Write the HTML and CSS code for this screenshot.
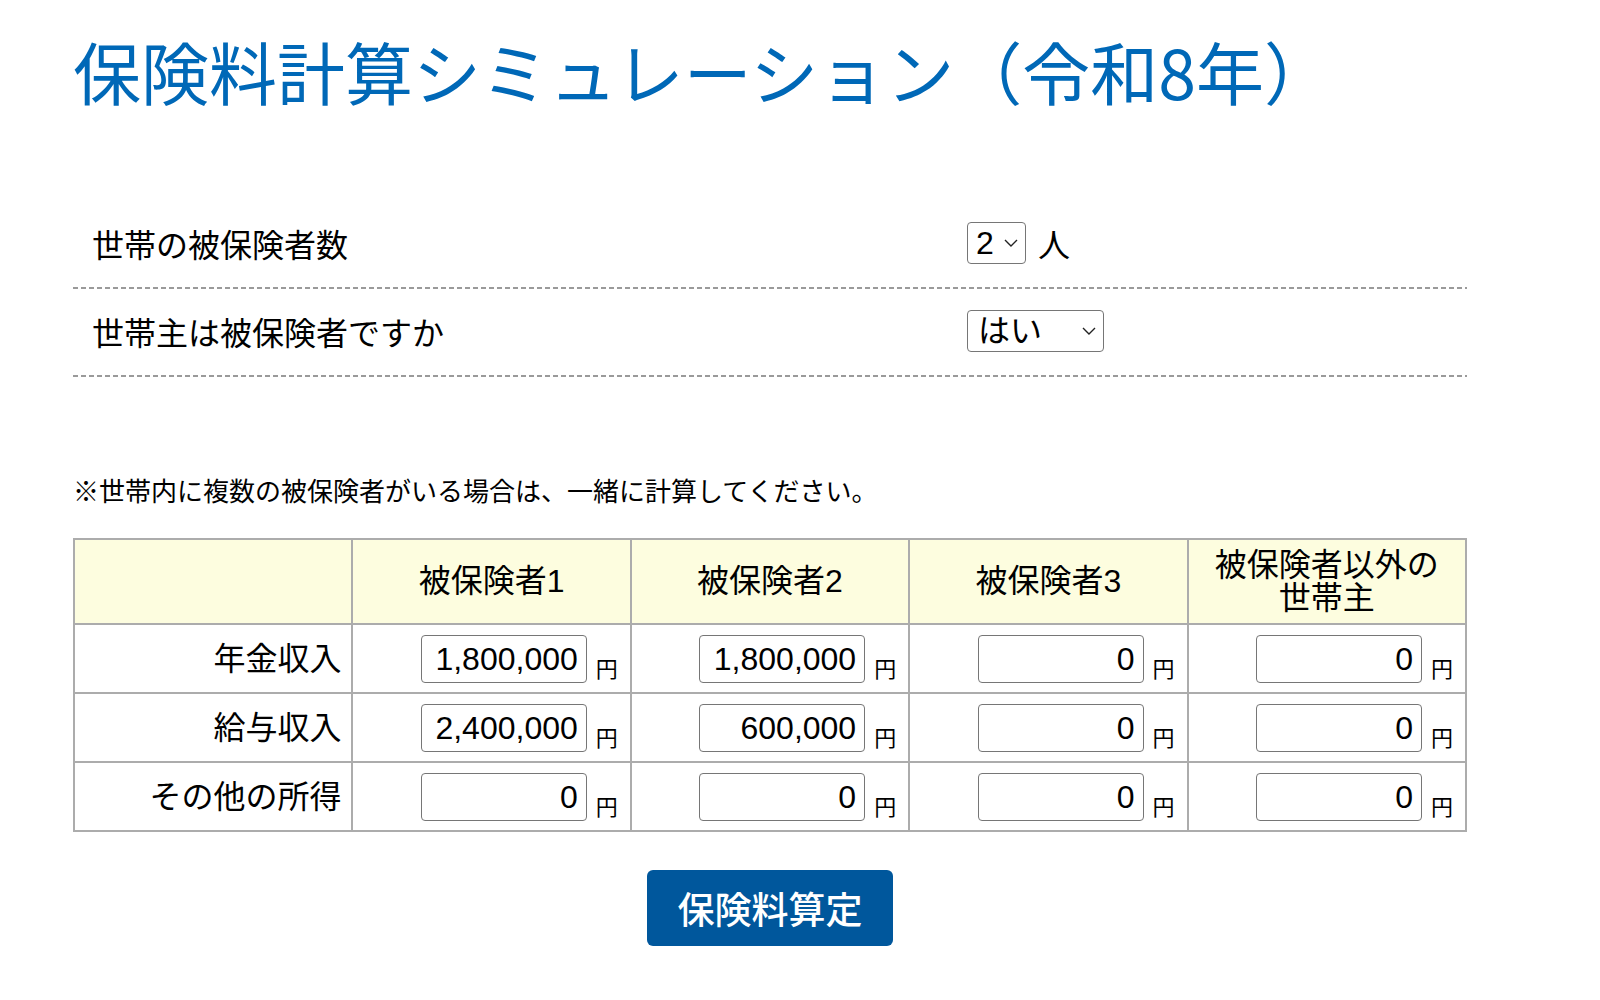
FILE: index.html
```html
<!DOCTYPE html>
<html lang="ja">
<head>
    <meta charset="UTF-8">
    <meta name="viewport" content="width=device-width, initial-scale=1.0">
    <title>保険料計算シミュレーション（令和8年）</title>
    <link rel="stylesheet" href="styles.css">
</head>
<body>
    <div class="page">
        <h1>保険料計算シミュレーション（令和8年）</h1>

        <div class="settings">
            <div class="setting">
                <div class="setting-label">世帯の被保険者数</div>
                <div class="setting-field">
                    <select class="sel sel-num">
                        <option>1</option>
                        <option selected>2</option>
                        <option>3</option>
                    </select>
                    <span class="unit-big">人</span>
                </div>
            </div>
            <div class="setting">
                <div class="setting-label">世帯主は被保険者ですか</div>
                <div class="setting-field">
                    <select class="sel sel-yes">
                        <option selected>はい</option>
                        <option>いいえ</option>
                    </select>
                </div>
            </div>
        </div>

        <p class="note">※世帯内に複数の被保険者がいる場合は、一緒に計算してください。</p>

        <table class="calc">
            <thead>
                <tr>
                    <th></th>
                    <th>被保険者1</th>
                    <th>被保険者2</th>
                    <th>被保険者3</th>
                    <th class="two-line">被保険者以外の<br>世帯主</th>
                </tr>
            </thead>
            <tbody>
                <tr>
                    <td class="row-label">年金収入</td>
                    <td><input class="amount" type="text" value="1,800,000"><span class="yen">円</span></td>
                    <td><input class="amount" type="text" value="1,800,000"><span class="yen">円</span></td>
                    <td><input class="amount" type="text" value="0"><span class="yen">円</span></td>
                    <td><input class="amount" type="text" value="0"><span class="yen">円</span></td>
                </tr>
                <tr>
                    <td class="row-label">給与収入</td>
                    <td><input class="amount" type="text" value="2,400,000"><span class="yen">円</span></td>
                    <td><input class="amount" type="text" value="600,000"><span class="yen">円</span></td>
                    <td><input class="amount" type="text" value="0"><span class="yen">円</span></td>
                    <td><input class="amount" type="text" value="0"><span class="yen">円</span></td>
                </tr>
                <tr>
                    <td class="row-label">その他の所得</td>
                    <td><input class="amount" type="text" value="0"><span class="yen">円</span></td>
                    <td><input class="amount" type="text" value="0"><span class="yen">円</span></td>
                    <td><input class="amount" type="text" value="0"><span class="yen">円</span></td>
                    <td><input class="amount" type="text" value="0"><span class="yen">円</span></td>
                </tr>
            </tbody>
        </table>

        <div class="actions">
            <button class="btn-calc" type="button">保険料算定</button>
        </div>
    </div>
</body>
</html>
```

FILE: styles.css
```css
body { margin: 0; background: #fff; color: #000; font-family: "Liberation Sans", "Noto Sans CJK JP", sans-serif; }
.page { width: 1394px; margin-left: 73px; }

h1 { margin: 30px 0 0; font-size: 68px; line-height: 82px; font-weight: normal; color: #0068b7; font-family: "Noto Sans CJK JP", sans-serif; }

/* 世帯の設定 */
.settings { margin-top: 89px; }
.setting { display: grid; grid-template-columns: 894px 1fr; align-items: center; height: 84px; background: repeating-linear-gradient(90deg, #9a9a9a 0 5px, transparent 5px 8px) left bottom / 100% 2px no-repeat; padding-bottom: 4px; }
.setting-label { padding-left: 19px; font-size: 32px; }
.setting-field { display: flex; align-items: center; gap: 12px; font-size: 32px; }
.unit-big { font-family: "Noto Sans CJK JP", sans-serif; }

.sel { appearance: none; -webkit-appearance: none; height: 42px; border: 1px solid #767676; border-radius: 4px; background: #fff url("data:image/svg+xml,%3Csvg xmlns='http://www.w3.org/2000/svg' width='14' height='8' viewBox='0 0 14 8'%3E%3Cpath d='M1 1 L7 7 L13 1' fill='none' stroke='%23222' stroke-width='1.4'/%3E%3C/svg%3E") no-repeat right 7px center; font-family: "Liberation Sans", "Noto Sans CJK JP", sans-serif; font-size: 32px; color: #000; padding: 0 0 0 8px; }
.sel-num { width: 59px; }
.sel-yes { width: 137px; padding-left: 10px; }

.note { margin: 96px 0 0; font-size: 26px; line-height: 39px; }

/* 収入入力表 */
.calc { width: 1394px; margin-top: 26px; border-collapse: collapse; table-layout: fixed; font-size: 32px; }
.calc th, .calc td { border: 2px solid #acacac; }
.calc th { height: 83px; padding: 0 6px; background: #fdfddf; font-weight: normal; line-height: 33px; }
.calc td { height: 48px; padding: 10px 12px 9px 6px; text-align: right; white-space: nowrap; line-height: 0; }
.calc td.row-label { padding-right: 10px; line-height: 48px; }

.amount { width: 166px; height: 48px; box-sizing: border-box; border: 1px solid #767676; border-radius: 4px; padding: 0 8px; text-align: right; font-family: "Liberation Sans", sans-serif; font-size: 32px; line-height: normal; color: #000; vertical-align: middle; }
.yen { display: inline-block; margin-left: 9px; font-size: 22px; line-height: 22px; vertical-align: -10px; }

.actions { display: flex; justify-content: center; margin-top: 38px; }
.btn-calc { width: 246px; height: 76px; border: none; border-radius: 6px; background: #00579c; color: #fff; font-family: "Noto Sans CJK JP", sans-serif; font-size: 37px; font-weight: 500; cursor: pointer; }
.btn-calc:hover { background: #004680; }
```
